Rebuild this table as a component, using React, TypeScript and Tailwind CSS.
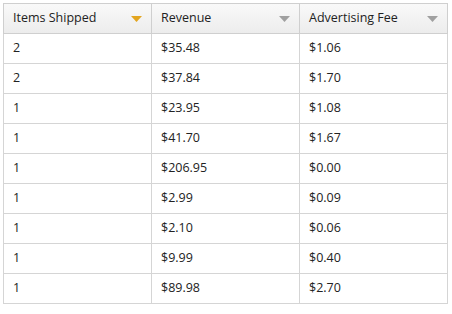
const rows: [string, string, string][] = [
  ["2", "$35.48", "$1.06"],
  ["2", "$37.84", "$1.70"],
  ["1", "$23.95", "$1.08"],
  ["1", "$41.70", "$1.67"],
  ["1", "$206.95", "$0.00"],
  ["1", "$2.99", "$0.09"],
  ["1", "$2.10", "$0.06"],
  ["1", "$9.99", "$0.40"],
  ["1", "$89.98", "$2.70"],
];

const Caret = ({ active }: { active?: boolean }) => (
  <svg width="11" height="6" viewBox="0 0 11 6" className="shrink-0">
    <path d="M0 0h11L5.5 6z" fill={active ? "#e3a51f" : "#a0a0a0"} />
  </svg>
);

const headers = [
  { label: "Items Shipped", active: true },
  { label: "Revenue" },
  { label: "Advertising Fee" },
];

export default function App() {
  return (
    <div className="w-[452px] h-[314px] bg-white p-[3px] font-['Open_Sans',Arial,sans-serif] text-[12.5px] text-[#222]">
      <table className="w-[445px] border-collapse table-fixed">
        <thead>
          <tr className="h-[30px] bg-gradient-to-b from-[#f9f9f9] to-[#ececec]">
            {headers.map((h) => (
              <th key={h.label} className="w-[148px] border border-[#cfcfcf] px-[9px] font-normal text-left">
                <div className="flex items-center justify-between">
                  <span>{h.label}</span>
                  <Caret active={h.active} />
                </div>
              </th>
            ))}
          </tr>
        </thead>
        <tbody>
          {rows.map((r, i) => (
            <tr key={i} className="h-[30px]">
              {r.map((c, j) => (
                <td key={j} className="border border-[#d5d5d5] px-[9px]">
                  {c}
                </td>
              ))}
            </tr>
          ))}
        </tbody>
      </table>
    </div>
  );
}
